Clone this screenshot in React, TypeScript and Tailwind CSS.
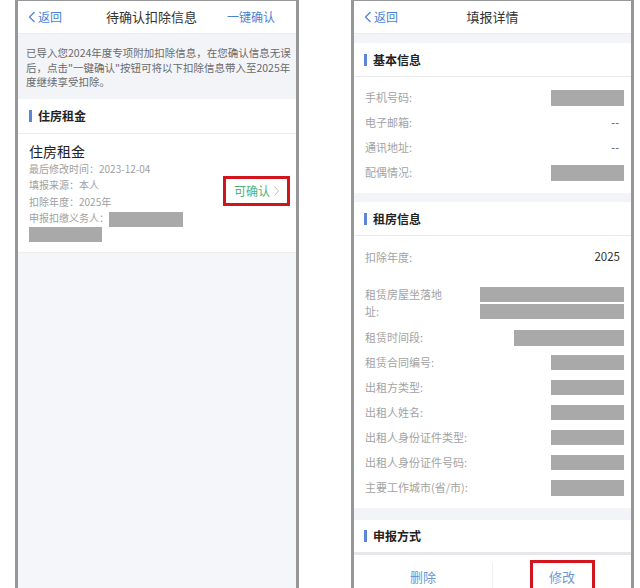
import React from "react";

const Back = () => (
  <div className="flex items-center gap-[2px] text-[12px] leading-none text-[#4b82d3]">
    <svg width="8" height="12" viewBox="0 0 8 12" fill="none">
      <path d="M6.5 1 L1.5 6 L6.5 11" stroke="#4b82d3" strokeWidth="1.2" />
    </svg>
    <span>返回</span>
  </div>
);

const SectionHeader = ({ title, cls }: { title: string; cls: string }) => (
  <div className={`bg-white flex items-center gap-[6px] pl-[10px] border-b border-[#ebebeb] ${cls}`}>
    <div className="w-[3px] h-[12px] bg-[#5a86d5]" />
    <span className="text-[12px] font-bold text-[#222]">{title}</span>
  </div>
);

const Block = ({ cls }: { cls: string }) => <div className={`bg-[#a9a9a9] ${cls}`} />;

const Row = ({ label, children, cls = "h-[25px]" }: { label: React.ReactNode; children: React.ReactNode; cls?: string }) => (
  <div className={`flex items-center justify-between pl-[11px] pr-[7px] ${cls}`}>
    <div className="text-[11px] text-[#a3a3a3] leading-[17px]">{label}</div>
    {children}
  </div>
);

const Dash = () => <span className="text-[11px] text-[#555] pr-[5px]">--</span>;

export default function App() {
  return (
    <div className="w-[640px] h-[588px] bg-white flex font-['Noto_Sans_CJK_SC',sans-serif] overflow-hidden">
      {/* Left phone */}
      <div className="ml-[15px] w-[284px] h-[588px] border-x-[3px] border-t border-[#979797] bg-[#f5f6fa] overflow-hidden flex flex-col">
        <div className="h-[33px] shrink-0 bg-white border-b border-[#ececec] grid grid-cols-[1fr_auto_1fr] items-center pl-[10px] pr-[21px]">
          <Back />
          <span className="text-[13px] text-[#333]">待确认扣除信息</span>
          <span className="justify-self-end text-[12px] text-[#4b82d3]">一键确认</span>
        </div>
        <div className="bg-[#f3f4f8] pl-[8px] pt-[12px] pb-[9px] text-[10.5px] leading-[14.5px] text-[#6a6a6a] whitespace-nowrap">
          已导入您2024年度专项附加扣除信息，在您确认信息无误
          <br />
          后，点击"一键确认"按钮可将以下扣除信息带入至2025年
          <br />
          度继续享受扣除。
        </div>
        <SectionHeader title="住房租金" cls="h-[35px] pl-[11px]" />
        <div className="bg-white flex items-center pl-[11px] pr-[6px] pt-[7px] pb-[10px]">
          <div className="flex-1">
            <div className="text-[14px] leading-[20px] text-[#222]">住房租金</div>
            <div className="text-[10px] leading-[16.5px] text-[#a0a0a0]">最后修改时间：2023-12-04</div>
            <div className="text-[10px] leading-[16.5px] text-[#a0a0a0]">填报来源：本人</div>
            <div className="text-[10px] leading-[16.5px] text-[#a0a0a0]">扣除年度：2025年</div>
            <div className="flex items-end h-[16.5px] text-[10px] leading-[16.5px] text-[#a0a0a0]">
              <span>申报扣缴义务人：</span>
              <div className="w-[74px] h-[15px] bg-[#a9a9a9]" />
            </div>
            <div className="w-[73px] h-[15px] bg-[#a9a9a9]" />
          </div>
          <div className="w-[67px] h-[30px] border-[3px] border-[#d2141c] flex items-center justify-center gap-[4px]">
            <span className="text-[12px] text-[#4fb27c]">可确认</span>
            <svg width="5" height="10" viewBox="0 0 5 10" fill="none">
              <path d="M0.5 0.5 L4.5 5 L0.5 9.5" stroke="#bdbdbd" strokeWidth="1" />
            </svg>
          </div>
        </div>
        <div className="flex-1 border-t border-[#eeeeee]" />
      </div>

      {/* Right phone */}
      <div className="ml-[52px] w-[283px] h-[588px] border-x-[3px] border-t border-[#979797] bg-[#f3f4f7] overflow-hidden flex flex-col">
        <div className="h-[33px] shrink-0 bg-white border-b border-[#ececec] grid grid-cols-[1fr_auto_1fr] items-center pl-[10px] pr-[10px]">
          <Back />
          <span className="text-[13px] text-[#333]">填报详情</span>
          <span />
        </div>
        <div className="h-[9px] shrink-0" />
        <SectionHeader title="基本信息" cls="h-[34px] shrink-0" />
        <div className="bg-white py-[8px] shrink-0">
          <Row label="手机号码:">
            <Block cls="w-[73px] h-[16px]" />
          </Row>
          <Row label="电子邮箱:">
            <Dash />
          </Row>
          <Row label="通讯地址:">
            <Dash />
          </Row>
          <Row label="配偶情况:">
            <Block cls="w-[73px] h-[16px]" />
          </Row>
        </div>
        <div className="h-[9px] shrink-0" />
        <SectionHeader title="租房信息" cls="h-[34px] shrink-0" />
        <div className="bg-white pt-[8px] pb-[8px] shrink-0">
          <Row label="扣除年度:" cls="h-[26px]">
            <span className="text-[11.5px] text-[#333] pr-[4px]">2025</span>
          </Row>
          <div className="flex items-center justify-between pl-[11px] pr-[7px] h-[44px] mt-[11px]">
            <div className="w-[86px] text-[11px] text-[#a3a3a3] leading-[17px]">租赁房屋坐落地址:</div>
            <div className="flex flex-col gap-[2px]">
              <Block cls="w-[144px] h-[15px]" />
              <Block cls="w-[144px] h-[15px]" />
            </div>
          </div>
          <Row label="租赁时间段:">
            <Block cls="w-[110px] h-[16px]" />
          </Row>
          <Row label="租赁合同编号:">
            <Block cls="w-[73px] h-[15px]" />
          </Row>
          <Row label="出租方类型:">
            <Block cls="w-[73px] h-[15px]" />
          </Row>
          <Row label="出租人姓名:">
            <Block cls="w-[73px] h-[15px]" />
          </Row>
          <Row label="出租人身份证件类型:">
            <Block cls="w-[73px] h-[15px]" />
          </Row>
          <Row label="出租人身份证件号码:">
            <Block cls="w-[73px] h-[15px]" />
          </Row>
          <Row label="主要工作城市(省/市):">
            <Block cls="w-[73px] h-[16px]" />
          </Row>
        </div>
        <div className="h-[12px] shrink-0" />
        <SectionHeader title="申报方式" cls="h-[32px] shrink-0 border-b-0" />
        <div className="h-[3px] shrink-0 bg-[#e6e7ea]" />
        <div className="h-[40px] shrink-0 bg-white flex items-start pt-[5px]">
          <div className="flex-1 flex justify-center items-center h-[34px]">
            <span className="text-[13px] text-[#6f95d6]">删除</span>
          </div>
          <div className="w-px h-[30px] mt-[3px] bg-[#eeeeee]" />
          <div className="flex-1 flex justify-center">
            <div className="w-[65px] h-[34px] border-[3px] border-[#d2141c] flex items-center justify-center">
              <span className="text-[13px] text-[#6f95d6]">修改</span>
            </div>
          </div>
        </div>
      </div>
    </div>
  );
}
